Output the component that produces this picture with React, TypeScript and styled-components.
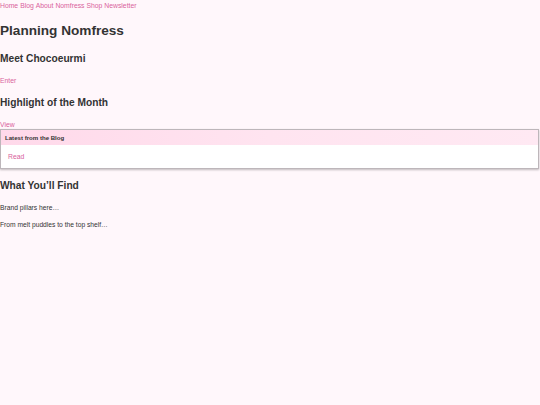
import React from "react";
import styled, { createGlobalStyle } from "styled-components";

const Global = createGlobalStyle`
  html, body { margin: 0; padding: 0; background: #fff7fb; }
  body { font-family: "Liberation Sans", Arial, sans-serif; color: #333; }
`;

const Page = styled.div`
  display: flex;
  flex-direction: column;
  min-height: 405px;
`;

const Nav = styled.nav`
  display: flex;
  gap: 2px;
  font-size: 6.8px;
  line-height: 11px;
`;

const NavLink = styled.a`
  color: #d9629c;
  text-decoration: none;
`;

const Title = styled.h1`
  margin: 11px 0 0;
  font-size: 13.6px;
  line-height: 18px;
  font-weight: bold;
  color: #333;
`;

const Heading = styled.h2<{ $top: number }>`
  margin: ${(p) => p.$top}px 0 0;
  font-size: 10.2px;
  line-height: 14px;
  font-weight: bold;
  color: #333;
`;

const LinkLine = styled.a<{ $top: number }>`
  display: block;
  margin-top: ${(p) => p.$top}px;
  font-size: 6.8px;
  line-height: 9px;
  color: #d9629c;
  text-decoration: none;
`;

const Card = styled.section`
  margin-right: 1px;
  border: 1px solid #bdb6ba;
  background: #fff;
  box-shadow: 0 1px 2px rgba(0, 0, 0, 0.25);
`;

const CardHeader = styled.div`
  height: 15px;
  display: flex;
  align-items: center;
  padding: 0 4px;
  font-size: 6.1px;
  font-weight: bold;
  color: #333;
  background: linear-gradient(90deg, #ffd9ea 0%, #ffe4f0 50%, #ffe9f3 100%);
`;

const CardBody = styled.div`
  height: 23px;
  display: flex;
  align-items: center;
  padding: 0 7px;
`;

const CardLink = styled.a`
  font-size: 6.8px;
  color: #d9629c;
  text-decoration: none;
`;

const Text = styled.p<{ $top: number }>`
  margin: ${(p) => p.$top}px 0 0;
  font-size: 6.7px;
  line-height: 9px;
  color: #333;
`;

export default function App() {
  return (
    <>
      <Global />
      <Page>
        <Nav>
          {["Home", "Blog", "About Nomfress", "Shop", "Newsletter"].map((n) => (
            <NavLink key={n} href="#">
              {n}
            </NavLink>
          ))}
        </Nav>
        <Title>Planning Nomfress</Title>
        <Heading $top={12}>Meet Chocoeurmi</Heading>
        <LinkLine $top={10} href="#">Enter</LinkLine>
        <Heading $top={11}>Highlight of the Month</Heading>
        <LinkLine $top={10} href="#">View</LinkLine>
        <Card>
          <CardHeader>Latest from the Blog</CardHeader>
          <CardBody>
            <CardLink href="#">Read</CardLink>
          </CardBody>
        </Card>
        <Heading $top={10}>What You’ll Find</Heading>
        <Text $top={10}>Brand pillars here…</Text>
        <Text $top={8}>From melt puddles to the top shelf…</Text>
      </Page>
    </>
  );
}
